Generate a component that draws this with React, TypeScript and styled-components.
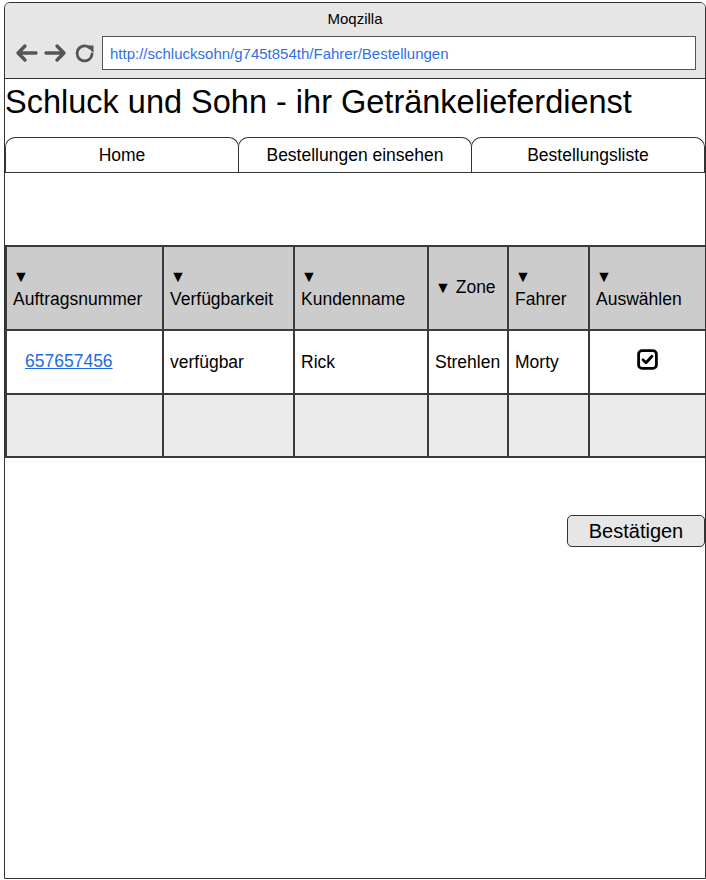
import React from 'react';
import styled, { createGlobalStyle } from 'styled-components';

const GlobalStyle = createGlobalStyle`
  body {
    margin: 0;
    background: #fff;
    font-family: "Liberation Sans", Arial, sans-serif;
    color: #000;
  }
`;

const Frame = styled.div`
  margin: 2px 0 0 4px;
  width: 700px;
  height: 875px;
  border: 1px solid #333;
  border-radius: 6px 6px 0 0;
  display: flex;
  flex-direction: column;
  overflow: hidden;
`;

const TitleBar = styled.div`
  height: 75px;
  background: #e6e6e6;
  border-bottom: 1px solid #333;
  display: flex;
  flex-direction: column;
`;

const WindowTitle = styled.div`
  height: 33px;
  line-height: 31px;
  text-align: center;
  font-size: 15px;
`;

const NavRow = styled.div`
  display: flex;
  align-items: center;
  padding-left: 9px;
`;

const NavIcons = styled.div`
  display: flex;
  align-items: center;
  gap: 6px;
  width: 88px;
  height: 34px;
`;

const AddressBar = styled.div`
  width: 594px;
  height: 34px;
  border: 1px solid #555;
  background: #fff;
  display: flex;
  align-items: center;
  padding-left: 7px;
  box-sizing: border-box;
  font-size: 15px;
  color: #2f6fe5;
`;

const Heading = styled.h1`
  margin: 0;
  padding: 4px 0 0 0;
  height: 54px;
  font-size: 32.5px;
  font-weight: normal;
  line-height: 38px;
`;

const TabStrip = styled.div`
  display: flex;
  border-bottom: 1px solid #333;
`;

const Tab = styled.div`
  flex: 1;
  height: 35px;
  border: 1px solid #333;
  border-bottom: none;
  border-radius: 10px 10px 0 0;
  margin-right: -1px;
  box-sizing: border-box;
  display: flex;
  align-items: center;
  justify-content: center;
  font-size: 17.5px;
  &:last-child {
    margin-right: 0;
  }
`;

const Table = styled.table`
  margin-top: 72px;
  width: 700px;
  border-collapse: collapse;
  table-layout: fixed;
  font-size: 17.5px;
`;

const HeadCell = styled.th`
  height: 84px;
  box-sizing: border-box;
  background: #cccccc;
  border: 2px solid #3a3a3a;
  text-align: left;
  font-weight: normal;
  padding: 0 6px 2px 6px;
  line-height: 22px;
`;

const Arrow = styled.span`
  font-size: 16px;
`;

const Row = styled.tr<{ $shade?: boolean }>`
  background: ${p => (p.$shade ? '#ebebeb' : '#fff')};
`;

const Cell = styled.td<{ $h: number; $pad?: number; $center?: boolean }>`
  height: ${p => p.$h}px;
  box-sizing: border-box;
  border: 2px solid #3a3a3a;
  padding: 0 0 0 ${p => p.$pad ?? 6}px;
  text-align: ${p => (p.$center ? 'center' : 'left')};
`;

const OrderLink = styled.a`
  color: #1e6be6;
  text-decoration: underline;
  position: relative;
  top: -1px;
`;

const ButtonRow = styled.div`
  display: flex;
  justify-content: flex-end;
  margin-top: 57px;
`;

const ConfirmButton = styled.button`
  width: 138px;
  height: 32px;
  border: 1px solid #333;
  border-radius: 5px;
  background: #e6e6e6;
  font-family: "Liberation Sans", Arial, sans-serif;
  font-size: 20px;
  color: #000;
  padding: 0;
`;

const BackIcon = () => (
  <svg width="24" height="20" viewBox="0 0 24 20">
    <path d="M22 10H4M11 3L4 10l7 7" stroke="#555" strokeWidth="3.4" fill="none" strokeLinecap="round" strokeLinejoin="round" />
  </svg>
);

const ForwardIcon = () => (
  <svg width="24" height="20" viewBox="0 0 24 20">
    <path d="M2 10h18M13 3l7 7-7 7" stroke="#555" strokeWidth="3.4" fill="none" strokeLinecap="round" strokeLinejoin="round" />
  </svg>
);

const ReloadIcon = () => (
  <svg width="22" height="22" viewBox="0 0 22 22">
    <path d="M18 12A7.5 7.5 0 1 1 15 5.4" stroke="#555" strokeWidth="2.8" fill="none" strokeLinecap="round" />
    <path d="M12 3.5h7.5v7.5z" fill="#555" />
  </svg>
);

const CheckIcon = () => (
  <svg width="21" height="21" viewBox="0 0 21 21">
    <rect x="1.6" y="1.6" width="17.8" height="17.8" rx="3.5" fill="none" stroke="#000" strokeWidth="2.8" />
    <path d="M6 10.8l3 3 6-6.6" stroke="#000" strokeWidth="2.8" fill="none" strokeLinecap="round" strokeLinejoin="round" />
  </svg>
);

const columns = [
  { label: 'Auftragsnummer', width: 157, stacked: true },
  { label: 'Verfügbarkeit', width: 131, stacked: true },
  { label: 'Kundenname', width: 134, stacked: true },
  { label: 'Zone', width: 80, stacked: false },
  { label: 'Fahrer', width: 81, stacked: true },
  { label: 'Auswählen', width: 117, stacked: true },
];

const App = () => {
  return (
    <>
      <GlobalStyle />
      <Frame>
        <TitleBar>
          <WindowTitle>Moqzilla</WindowTitle>
          <NavRow>
            <NavIcons>
              <BackIcon />
              <ForwardIcon />
              <ReloadIcon />
            </NavIcons>
            <AddressBar>http://schlucksohn/g745t854th/Fahrer/Bestellungen</AddressBar>
          </NavRow>
        </TitleBar>
        <Heading>Schluck und Sohn - ihr Getränkelieferdienst</Heading>
        <TabStrip>
          <Tab>Home</Tab>
          <Tab>Bestellungen einsehen</Tab>
          <Tab>Bestellungsliste</Tab>
        </TabStrip>
        <Table>
          <colgroup>
            {columns.map(col => (
              <col key={col.label} style={{ width: col.width }} />
            ))}
          </colgroup>
          <thead>
            <tr>
              {columns.map(col => (
                <HeadCell key={col.label}>
                  <Arrow>▼</Arrow>
                  {col.stacked ? <br /> : ' '}
                  {col.label}
                </HeadCell>
              ))}
            </tr>
          </thead>
          <tbody>
            <Row>
              <Cell $h={64} $pad={18}>
                <OrderLink href="#">657657456</OrderLink>
              </Cell>
              <Cell $h={64}>verfügbar</Cell>
              <Cell $h={64}>Rick</Cell>
              <Cell $h={64}>Strehlen</Cell>
              <Cell $h={64}>Morty</Cell>
              <Cell $h={64} $pad={0} $center>
                <CheckIcon />
              </Cell>
            </Row>
            <Row $shade>
              {columns.map(col => (
                <Cell key={col.label} $h={63} />
              ))}
            </Row>
          </tbody>
        </Table>
        <ButtonRow>
          <ConfirmButton>Bestätigen</ConfirmButton>
        </ButtonRow>
      </Frame>
    </>
  );
};

export default App;
